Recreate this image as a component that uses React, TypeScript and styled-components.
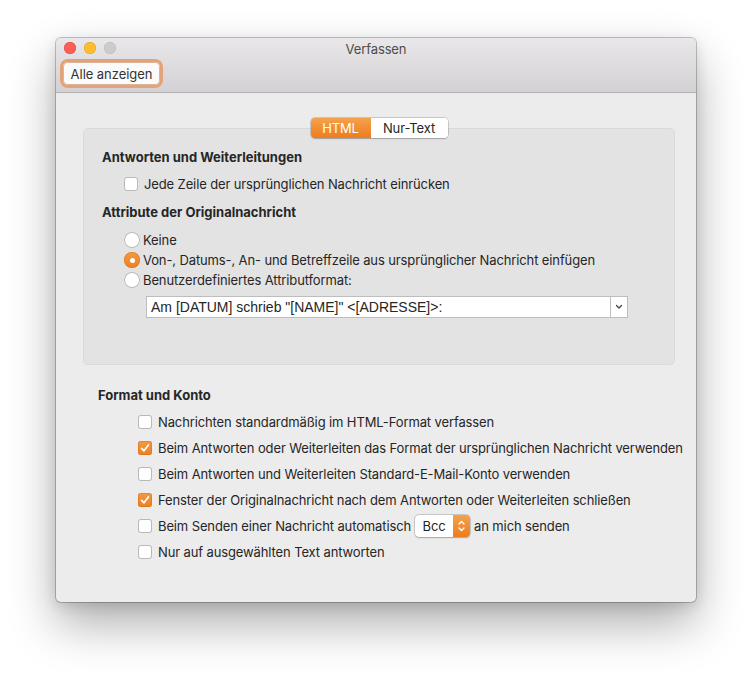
import React from "react";
import styled, { createGlobalStyle } from "styled-components";

const Global = createGlobalStyle`
  html, body { margin: 0; padding: 0; background: #ffffff; }
  body { font-family: Inter, "Noto Sans", "Liberation Sans", sans-serif; -webkit-font-smoothing: antialiased; }
`;

const Page = styled.div`
  padding: 38px 0 0 56px;
  width: 752px;
  height: 677px;
  box-sizing: border-box;
`;

const Window = styled.div`
  width: 640px;
  height: 564px;
  border-radius: 5px;
  background: #ececec;
  box-shadow: 0 0 0 1px rgba(0, 0, 0, 0.22), 0 22px 48px rgba(0, 0, 0, 0.32), 0 4px 14px rgba(0,0,0,0.12);
  overflow: hidden;
  display: flex;
  flex-direction: column;
`;

const Chrome = styled.div`
  height: 54px;
  background: linear-gradient(#e9e7e9, #d3d1d3);
  border-bottom: 1px solid #b4b2b4;
  display: flex;
  flex-direction: column;
`;

const TitleRow = styled.div`
  height: 22px;
  position: relative;
  display: flex;
  align-items: center;
  justify-content: center;
`;

const Lights = styled.div`
  position: absolute;
  left: 8px;
  top: 4px;
  display: flex;
  gap: 8px;
`;

const Light = styled.span<{ $c: string; $b: string }>`
  width: 12px;
  height: 12px;
  border-radius: 50%;
  background: ${(p) => p.$c};
  box-shadow: inset 0 0 0 0.5px ${(p) => p.$b};
`;

const Title = styled.div`
  font-size: 13px;
  color: #4d4d4d;
  letter-spacing: -0.12px;
`;

const Toolbar = styled.div`
  display: flex;
  padding: 2px 0 0 7px;
`;

const ToolButton = styled.button`
  height: 23px;
  width: 97px;
  padding: 0;
  font: inherit;
  font-size: 13px;
  letter-spacing: -0.05px;
  color: #333;
  background: #fbfbfb;
  border: none;
  border-radius: 5px;
  box-shadow: 0 0 0 3px #e4a377, inset 0 0 0 1px #d9b59c;
`;

const Content = styled.div`
  flex: 1;
  display: flex;
  flex-direction: column;
  padding: 25px 21px 0 27px;
`;

const SegWrap = styled.div`
  display: flex;
  justify-content: center;
  position: relative;
  z-index: 1;
`;

const Segmented = styled.div`
  display: flex;
  height: 20px;
  border-radius: 4px;
  background: #fff;
  box-shadow: 0 0 0 0.5px rgba(0, 0, 0, 0.25), 0 0.5px 1.5px rgba(0, 0, 0, 0.2);
  overflow: hidden;
`;

const Segment = styled.div<{ $active?: boolean; $w: number }>`
  width: ${(p) => p.$w}px;
  display: flex;
  align-items: center;
  justify-content: center;
  font-size: 13px;
  letter-spacing: -0.12px;
  color: ${(p) => (p.$active ? "#fff" : "#262626")};
  background: ${(p) => (p.$active ? "linear-gradient(#f4a24d, #ee7c1d)" : "#fff")};
`;

const GroupBox = styled.div`
  margin-top: -10px;
  height: 237px;
  box-sizing: border-box;
  background: #e3e3e3;
  border: 1px solid #dadada;
  border-radius: 5px;
  padding: 20px 0 0 18px;
  display: flex;
  flex-direction: column;
`;

const Heading = styled.div<{ $mt?: number }>`
  font-size: 13px;
  font-weight: 700;
  color: #262626;
  line-height: 16px;
  margin-top: ${(p) => p.$mt ?? 0}px;
`;

const Row = styled.label<{ $mt?: number; $indent: number; $h?: number }>`
  display: flex;
  align-items: center;
  height: ${(p) => p.$h ?? 20}px;
  margin-top: ${(p) => p.$mt ?? 0}px;
  margin-left: ${(p) => p.$indent}px;
  font-size: 13px;
  letter-spacing: -0.12px;
  color: #262626;
  white-space: nowrap;
`;

const Box = styled.span<{ $on?: boolean }>`
  width: 14px;
  height: 14px;
  box-sizing: border-box;
  border-radius: 3px;
  flex: none;
  margin-right: 6px;
  display: flex;
  align-items: center;
  justify-content: center;
  background: ${(p) => (p.$on ? "linear-gradient(#f39a42, #ee801f)" : "#fff")};
  box-shadow: ${(p) =>
    p.$on ? "inset 0 0 0 0.5px rgba(180,90,10,0.5)" : "inset 0 0 0 1px #b9b9b9"};
`;

const Radio = styled.span<{ $on?: boolean }>`
  width: 16px;
  height: 16px;
  box-sizing: border-box;
  border-radius: 50%;
  flex: none;
  margin-right: 3px;
  display: flex;
  align-items: center;
  justify-content: center;
  background: ${(p) => (p.$on ? "linear-gradient(#f39a42, #ee801f)" : "#fff")};
  box-shadow: ${(p) =>
    p.$on ? "inset 0 0 0 0.5px rgba(180,90,10,0.5)" : "inset 0 0 0 1px #b9b9b9"};
  &::after {
    content: "";
    display: ${(p) => (p.$on ? "block" : "none")};
    width: 5px;
    height: 5px;
    border-radius: 50%;
    background: #fff;
  }
`;

const Combo = styled.div`
  margin: 6px 0 0 44px;
  width: 482px;
  height: 22px;
  box-sizing: border-box;
  background: #fff;
  border: 1px solid #bdbdbd;
  display: flex;
  align-items: center;
  color: #262626;
`;

const ComboText = styled.div`
  flex: 1;
  padding-left: 4px;
  font-size: 14px;
  font-family: "Liberation Sans", Arial, sans-serif;
`;

const ComboArrow = styled.div`
  width: 16px;
  height: 100%;
  border-left: 1px solid #bdbdbd;
  display: flex;
  align-items: center;
  justify-content: center;
`;

const Section = styled.div`
  display: flex;
  flex-direction: column;
  padding: 22px 0 0 15px;
`;

const Rows = styled.div`
  display: flex;
  flex-direction: column;
  gap: 4px;
  margin-top: 8px;
`;

const Popup = styled.div`
  display: flex;
  height: 22px;
  margin: 0 4px 0 4px;
  border-radius: 4px;
  background: #fff;
  box-shadow: 0 0 0 0.5px rgba(0, 0, 0, 0.25), 0 0.5px 1.5px rgba(0, 0, 0, 0.2);
  overflow: hidden;
`;

const PopupLabel = styled.div`
  width: 38px;
  display: flex;
  align-items: center;
  justify-content: center;
  font-size: 13px;
  color: #262626;
`;

const PopupStepper = styled.div`
  width: 17px;
  background: linear-gradient(#f4a24d, #ee7c1d);
  display: flex;
  align-items: center;
  justify-content: center;
`;

const Check = () => (
  <svg width="10" height="10" viewBox="0 0 10 10">
    <path d="M1.6 5.4 L4 7.8 L8.4 2" fill="none" stroke="#fff" strokeWidth="1.7" strokeLinecap="round" strokeLinejoin="round" />
  </svg>
);

const CB = ({ on, children }: { on?: boolean; children: React.ReactNode }) => (
  <Row $indent={40} $h={22}>
    <Box $on={on}>{on && <Check />}</Box>
    {children}
  </Row>
);

export default function App() {
  return (
    <>
      <Global />
      <Page>
        <Window>
          <Chrome>
            <TitleRow>
              <Lights>
                <Light $c="#fd5f57" $b="#e0443e" />
                <Light $c="#febc2e" $b="#dea123" />
                <Light $c="#cdcccd" $b="#b9b8b9" />
              </Lights>
              <Title>Verfassen</Title>
            </TitleRow>
            <Toolbar>
              <ToolButton>Alle anzeigen</ToolButton>
            </Toolbar>
          </Chrome>
          <Content>
            <SegWrap>
              <Segmented>
                <Segment $active $w={60}>HTML</Segment>
                <Segment $w={77}>Nur-Text</Segment>
              </Segmented>
            </SegWrap>
            <GroupBox>
              <Heading>Antworten und Weiterleitungen</Heading>
              <Row $indent={22} $mt={9}>
                <Box />
                Jede Zeile der ursprünglichen Nachricht einrücken
              </Row>
              <Heading $mt={10}>Attribute der Originalnachricht</Heading>
              <Row $indent={22} $mt={10}>
                <Radio />
                Keine
              </Row>
              <Row $indent={22}>
                <Radio $on />
                Von-, Datums-, An- und Betreffzeile aus ursprünglicher Nachricht einfügen
              </Row>
              <Row $indent={22}>
                <Radio />
                Benutzerdefiniertes Attributformat:
              </Row>
              <Combo>
                <ComboText>Am [DATUM] schrieb "[NAME]" &lt;[ADRESSE]&gt;:</ComboText>
                <ComboArrow>
                  <svg width="8" height="6" viewBox="0 0 8 6">
                    <path d="M1.5 1.5 L4 4 L6.5 1.5" fill="none" stroke="#444" strokeWidth="1.3" strokeLinecap="round" strokeLinejoin="round" />
                  </svg>
                </ComboArrow>
              </Combo>
            </GroupBox>
            <Section>
              <Heading>Format und Konto</Heading>
              <Rows>
                <CB>Nachrichten standardmäßig im HTML-Format verfassen</CB>
                <CB on>Beim Antworten oder Weiterleiten das Format der ursprünglichen Nachricht verwenden</CB>
                <CB>Beim Antworten und Weiterleiten Standard-E-Mail-Konto verwenden</CB>
                <CB on>Fenster der Originalnachricht nach dem Antworten oder Weiterleiten schließen</CB>
                <CB>
                  Beim Senden einer Nachricht automatisch
                  <Popup>
                    <PopupLabel>Bcc</PopupLabel>
                    <PopupStepper>
                      <svg width="9" height="14" viewBox="0 0 9 14">
                        <path d="M2 5 L4.5 2.5 L7 5 M2 9 L4.5 11.5 L7 9" fill="none" stroke="#fff" strokeWidth="1.4" strokeLinecap="round" strokeLinejoin="round" />
                      </svg>
                    </PopupStepper>
                  </Popup>
                  an mich senden
                </CB>
                <CB>Nur auf ausgewählten Text antworten</CB>
              </Rows>
            </Section>
          </Content>
        </Window>
      </Page>
    </>
  );
}
